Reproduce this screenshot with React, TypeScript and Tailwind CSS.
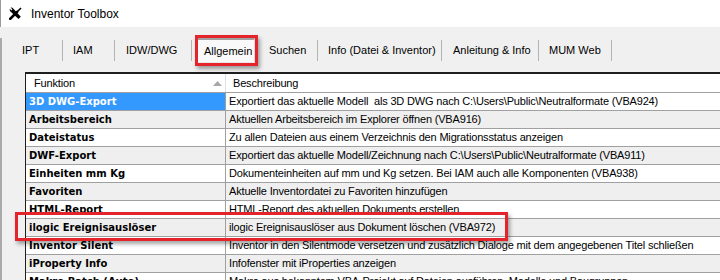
import React from "react";

const rows: [string, string][] = [
  ["3D DWG-Export", "Exportiert das aktuelle Modell  als 3D DWG nach C:\\Users\\Public\\Neutralformate (VBA924)"],
  ["Arbeitsbereich", "Aktuellen Arbeitsbereich im Explorer öffnen (VBA916)"],
  ["Dateistatus", "Zu allen Dateien aus einem Verzeichnis den Migrationsstatus anzeigen"],
  ["DWF-Export", "Exportiert das aktuelle Modell/Zeichnung nach C:\\Users\\Public\\Neutralformate (VBA911)"],
  ["Einheiten mm Kg", "Dokumenteinheiten auf mm und Kg setzen. Bei IAM auch alle Komponenten (VBA938)"],
  ["Favoriten", "Aktuelle Inventordatei zu Favoriten hinzufügen"],
  ["HTML-Report", "HTML-Report des aktuellen Dokuments erstellen"],
  ["ilogic Ereignisauslöser", "ilogic Ereignisauslöser aus Dokument löschen (VBA972)"],
  ["Inventor Silent", "Inventor in den Silentmode versetzen und zusätzlich Dialoge mit dem angegebenen Titel schließen"],
  ["iProperty Info", "Infofenster mit iProperties anzeigen"],
  ["Makro Batch (Auto)", "Makro aus bekanntem VBA-Projekt auf Dateien ausführen, Modelle und Baugruppen"],
];

function Sep() {
  return <div className="w-px h-[21px] bg-[#b4b4b4] shrink-0" />;
}

export default function App() {
  return (
    <div className="relative w-[720px] h-[280px] overflow-hidden bg-[#f0f0f0] text-black font-['Liberation_Sans',Arial,sans-serif] text-[11px] leading-none">
      {/* Title bar */}
      <div className="flex h-[27px] items-center bg-white border-l border-[#9a9a9a] pl-[8px]">
        <svg width="13" height="13" viewBox="0 0 13 13">
          <path d="M1.2 11.8 L8 5" stroke="#000" strokeWidth="2.6" strokeLinecap="round" />
          <path d="M7.5 5.5 L10 3 L12 1" stroke="#000" strokeWidth="1.6" />
          <path d="M2 0.6 A2.6 2.6 0 0 0 1.2 4.2 L9.5 12 L11.8 9.7 L4.2 1.5 A2.6 2.6 0 0 0 2 0.6 Z" fill="#000" />
          <path d="M0.6 1.6 L2.4 3.4 L3.4 2.4 L1.6 0.6 Z" fill="#fff" />
        </svg>
        <span className="ml-[9px] text-[12px]">Inventor Toolbox</span>
      </div>

      <div className="border-l-[2px] border-[#aaaaaa] h-[253px]">
        {/* Tabs */}
        <div className="flex items-center h-[25px] mt-[11px] mb-[9px] whitespace-nowrap">
          <div className="ml-[20px] w-[40px]">IPT</div>
          <Sep />
          <div className="w-[51px] pl-[10px]">IAM</div>
          <Sep />
          <div className="w-[76px] pl-[11px]">IDW/DWG</div>
          <Sep />
          <div className="ml-[5px] w-[58px] h-[25px] flex items-center pl-[6px] bg-[#f9f9f9] border-t-[2px] border-l border-[#a0a0a0] border-r border-r-[#dcdcdc] border-b border-b-[#e8e8e8]">
            Allgemein
          </div>
          <div className="w-[62px] pl-[14px]">Suchen</div>
          <Sep />
          <div className="w-[123px] pl-[10px]">Info (Datei &amp; Inventor)</div>
          <Sep />
          <div className="w-[96px] pl-[11px]">Anleitung &amp; Info</div>
          <Sep />
          <div className="w-[72px] pl-[10px]">MUM Web</div>
          <Sep />
        </div>

        {/* Table */}
        <div className="ml-[23px] border-l border-[#1e1e1e] border-t-[2px] border-t-[#1e1e1e] bg-white tracking-[-0.17px]">
          <div className="flex h-[19px] border-b border-[#a0a0a0] bg-white">
            <div className="relative w-[200px] shrink-0 border-r border-[#e0e0e0] flex items-center pl-[8px]">
              Funktion
              <svg className="absolute left-[187px] top-[7px]" width="9" height="5" viewBox="0 0 9 5">
                <path d="M0 5 L4.5 0 L9 5 Z" fill="#a8a8a8" />
              </svg>
            </div>
            <div className="flex-1 flex items-center pl-[7px]">Beschreibung</div>
          </div>
          {rows.map(([f, d], i) => {
            const sel = i === 0;
            const gray = i % 2 === 1;
            return (
              <div key={i} className={`flex h-[18px] border-b border-[#a0a0a0] ${gray ? "bg-[#efefef]" : "bg-white"}`}>
                <div
                  className={`w-[200px] shrink-0 border-r border-[#a0a0a0] flex items-center pl-[3px] font-['DejaVu_Sans',sans-serif] font-bold text-[10px] tracking-normal whitespace-nowrap ${
                    sel ? "bg-[#3399ff] text-white" : ""
                  }`}
                >
                  {f}
                </div>
                <div className="flex-1 flex items-center pl-[3px] whitespace-pre">{d}</div>
              </div>
            );
          })}
        </div>
      </div>

      {/* Annotations */}
      <div className="absolute left-[195px] top-[35px] w-[63px] h-[31px] border-[3px] border-[#e3242b] shadow-[2px_3px_4px_rgba(0,0,0,0.35)]" />
      <div className="absolute left-[15px] top-[212px] w-[493px] h-[29px] border-[3px] border-[#e3242b] shadow-[2px_3px_4px_rgba(0,0,0,0.35)]" />
    </div>
  );
}
